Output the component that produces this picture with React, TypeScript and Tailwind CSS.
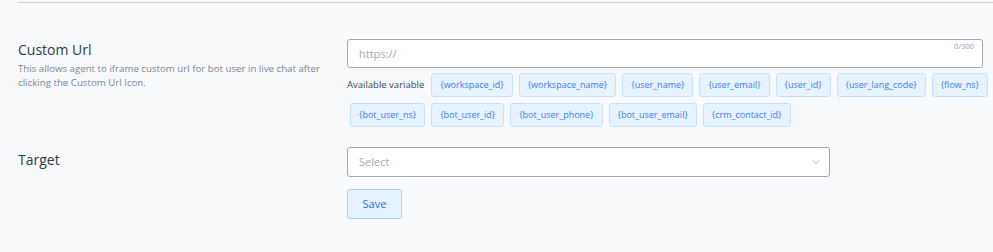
import { ChevronDown } from 'lucide-react';

const variables = [
  '{workspace_id}',
  '{workspace_name}',
  '{user_name}',
  '{user_email}',
  '{user_id}',
  '{user_lang_code}',
  '{flow_ns}',
  '{bot_user_ns}',
  '{bot_user_id}',
  '{bot_user_phone}',
  '{bot_user_email}',
  '{crm_contact_id}',
];

function FieldLabel({ title, description }: { title: string; description?: string }) {
  return (
    <div className="w-[329px] shrink-0">
      <h3 className="text-[14px] font-medium leading-5 text-[#2f3a4a]">{title}</h3>
      {description && (
        <p className="mt-[2px] w-[310px] text-[9.7px] leading-[14px] text-[#7a8594]">{description}</p>
      )}
    </div>
  );
}

export default function App() {
  return (
    <div
      className="h-[252px] w-[993px] overflow-hidden bg-[#f8f9fb] pl-[18px]"
      style={{ fontFamily: '"Open Sans", "Liberation Sans", sans-serif' }}
    >
      <div className="mt-[2px] h-px bg-[#cfd2d8]" />

      <div className="mt-[36px] flex">
        <div className="pt-[1px]">
          <FieldLabel
            title="Custom Url"
            description="This allows agent to iframe custom url for bot user in live chat after clicking the Custom Url Icon."
          />
        </div>
        <div>
          <div className="relative h-[29px] w-[636px] rounded-[3px] border border-[#a3a9b3] bg-white">
            <input
              className="h-full w-full bg-transparent px-[11px] text-[11px] text-[#3a4250] outline-none placeholder:text-[#a5abb4]"
              placeholder="https://"
            />
            <span className="absolute right-[8px] top-[1px] text-[7.5px] text-[#9aa1ab]">0/300</span>
          </div>
          <div className="mt-[2px] flex w-[646px] flex-wrap items-center">
            <span className="mr-[4px] text-[9.5px] text-[#3d4552]">Available variable</span>
            {variables.map((v) => (
              <span
                key={v}
                className="m-[3px] flex h-[24px] items-center rounded-[3px] border border-[#c9e0fb] bg-[#e7f2ff] px-[8px] text-[9px] text-[#3b7ef0]"
              >
                {v}
              </span>
            ))}
          </div>
        </div>
      </div>

      <div className="mt-[17px] flex">
        <div className="pt-[3px]">
          <FieldLabel title="Target" />
        </div>
        <div>
          <button
            type="button"
            className="flex h-[30px] w-[483px] items-center justify-between rounded-[3px] border border-[#a3a9b3] bg-white pl-[11px] pr-[7px] text-[11px] text-[#a5abb4]"
          >
            <span>Select</span>
            <ChevronDown size={12} strokeWidth={1.5} className="text-[#9aa1ab]" />
          </button>
          <button
            type="button"
            className="mt-[12px] h-[30px] w-[55px] rounded-[3px] border border-[#a9cdf5] bg-[#e6f2ff] text-[11px] text-[#2a6fe0]"
          >
            Save
          </button>
        </div>
      </div>
    </div>
  );
}
